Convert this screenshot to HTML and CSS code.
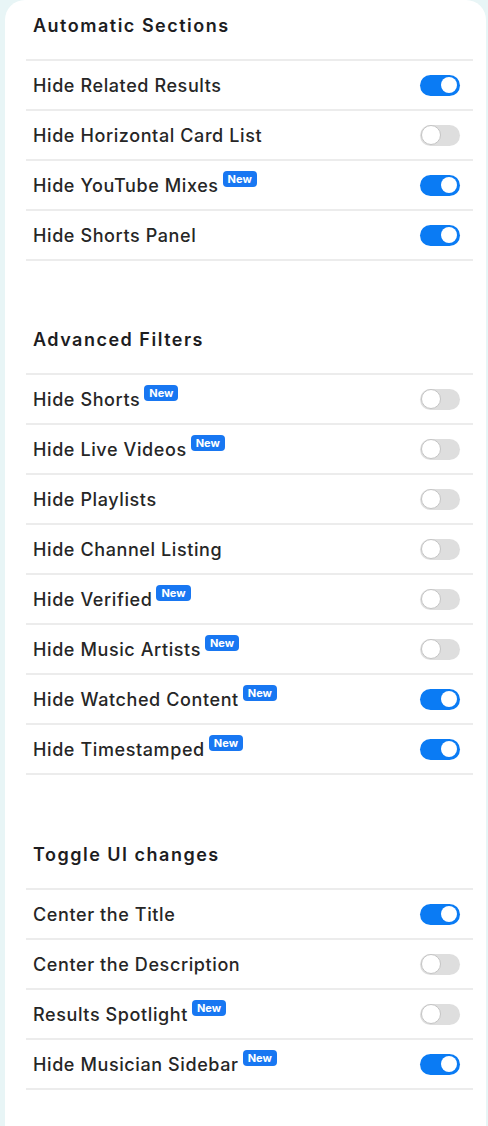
FILE: index.html
```html
<!DOCTYPE html>
<html>
<head>
  <meta charset="UTF-8">
  <link rel="stylesheet" href="styles.css">
</head>
<body>
  <div id="panel">
    <div class="section">
      <h2 class="section-title">Automatic Sections</h2>
      <div class="row"><span class="label">Hide Related Results</span><span class="toggle on"></span></div>
      <div class="row"><span class="label">Hide Horizontal Card List</span><span class="toggle"></span></div>
      <div class="row"><span class="label">Hide YouTube Mixes<span class="badge">New</span></span><span class="toggle on"></span></div>
      <div class="row"><span class="label">Hide Shorts Panel</span><span class="toggle on"></span></div>
    </div>

    <div class="section">
      <h2 class="section-title">Advanced Filters</h2>
      <div class="row"><span class="label">Hide Shorts<span class="badge">New</span></span><span class="toggle"></span></div>
      <div class="row"><span class="label">Hide Live Videos<span class="badge">New</span></span><span class="toggle"></span></div>
      <div class="row"><span class="label">Hide Playlists</span><span class="toggle"></span></div>
      <div class="row"><span class="label">Hide Channel Listing</span><span class="toggle"></span></div>
      <div class="row"><span class="label">Hide Verified<span class="badge">New</span></span><span class="toggle"></span></div>
      <div class="row"><span class="label">Hide Music Artists<span class="badge">New</span></span><span class="toggle"></span></div>
      <div class="row"><span class="label">Hide Watched Content<span class="badge">New</span></span><span class="toggle on"></span></div>
      <div class="row"><span class="label">Hide Timestamped<span class="badge">New</span></span><span class="toggle on"></span></div>
    </div>

    <div class="section">
      <h2 class="section-title">Toggle UI changes</h2>
      <div class="row"><span class="label">Center the Title</span><span class="toggle on"></span></div>
      <div class="row"><span class="label">Center the Description</span><span class="toggle"></span></div>
      <div class="row"><span class="label">Results Spotlight<span class="badge">New</span></span><span class="toggle"></span></div>
      <div class="row"><span class="label">Hide Musician Sidebar<span class="badge">New</span></span><span class="toggle on"></span></div>
    </div>
  </div>
</body>
</html>
```

FILE: styles.css
```css
* { box-sizing: border-box; margin: 0; padding: 0; }
body {
  margin: 0;
  background: #e8f5f6;
  font-family: Inter, "Noto Sans", sans-serif;
  color: #1d1d1f;
  height: 1126px;
  overflow: hidden;
}
#panel {
  margin-left: 5px;
  width: 481px;
  min-height: 1126px;
  background: #fff;
  border-radius: 20px 20px 0 0;
  padding: 1px 13px 0 21px;
}
.section {
  border-bottom: 2px solid #ececec;
  margin-bottom: 54px;
}
.section:nth-child(2) { margin-bottom: 55px; }
.section-title {
  font-size: 18px;
  font-weight: 600;
  line-height: 24px;
  padding: 13px 7px 21px;
  border-bottom: 2px solid #ececec;
  letter-spacing: 1.5px;
}
.row {
  display: flex;
  align-items: center;
  justify-content: space-between;
  height: 50px;
  padding: 0 13px 0 7px;
  border-bottom: 2px solid #ececec;
  font-size: 18px;
  font-weight: 500;
  color: #262626;
}
.row:last-child { border-bottom: none; height: 48px; }
.label {
  display: flex;
  line-height: 22px;
  padding-top: 2px;
  letter-spacing: 0.6px;
}
.badge {
  align-self: flex-start;
  margin: -4px 0 0 4px;
  background: #1877f2;
  color: #fff;
  font-size: 11px;
  font-weight: 700;
  line-height: 16px;
  letter-spacing: 0;
  padding: 0 5px;
  border-radius: 4px;
}
.toggle {
  display: flex;
  align-items: center;
  width: 40px;
  height: 21px;
  border-radius: 11px;
  background: #dedede;
  padding: 0 2px;
}
.toggle::after {
  content: "";
  width: 18px;
  height: 18px;
  border-radius: 50%;
  background: #fff;
  border: 1.5px solid #c4c4c4;
  margin-left: -1px;
}
.toggle.on {
  background: #0a7bf4;
  justify-content: flex-end;
}
.toggle.on::after {
  width: 16px;
  height: 16px;
  border: none;
  margin: 0 1px 0 0;
}
```
